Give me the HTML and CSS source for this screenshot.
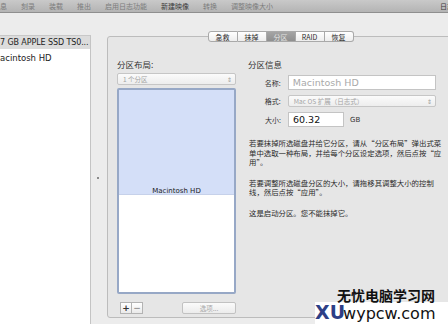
FILE: index.html
```html
<!DOCTYPE html>
<html lang="zh-CN">
<head>
    <meta charset="utf-8">
    <title>磁盘工具 - 分区</title>
    <link rel="stylesheet" href="styles.css">
</head>
<body>
    <div class="window">
        <div class="toolbar">
            <span class="tool first">信息</span>
            <span class="tool">刻录</span>
            <span class="tool">装载</span>
            <span class="tool">推出</span>
            <span class="tool">启用日志功能</span>
            <span class="tool active">新建映像</span>
            <span class="tool">转换</span>
            <span class="tool">调整映像大小</span>
            <span class="tool log">日志</span>
        </div>

        <div class="content">
            <div class="sidebar">
                <div class="disk">7 GB APPLE SSD TS0...</div>
                <div class="volume">acintosh HD</div>
            </div>

            <div class="splitter"><span class="grip"></span></div>

            <div class="tabview">
                <div class="tabs">
                    <span class="tab">急救</span>
                    <span class="tab">抹掉</span>
                    <span class="tab selected">分区</span>
                    <span class="tab">RAID</span>
                    <span class="tab">恢复</span>
                </div>

                <div class="pane">
                    <div class="layout-col">
                        <div class="heading">分区布局:</div>
                        <div class="popup">
                            <span>1 个分区</span>
                            <span class="arrows">&#8661;</span>
                        </div>
                        <div class="partitions">
                            <div class="part-used">
                                <span>Macintosh HD</span>
                            </div>
                            <div class="part-free"></div>
                        </div>
                        <div class="part-buttons">
                            <div class="plusminus">
                                <span class="pm">+</span>
                                <span class="pm">&minus;</span>
                            </div>
                            <span class="options">选项...</span>
                        </div>
                    </div>

                    <div class="info-col">
                        <div class="heading">分区信息</div>
                        <div class="field">
                            <label>名称:</label>
                            <div class="input name">Macintosh HD</div>
                        </div>
                        <div class="field">
                            <label>格式:</label>
                            <div class="popup format">
                                <span>Mac OS 扩展（日志式）</span>
                                <span class="arrows">&#8661;</span>
                            </div>
                        </div>
                        <div class="field">
                            <label>大小:</label>
                            <div class="input size">60.32</div>
                            <span class="unit">GB</span>
                        </div>

                        <p class="help">若要抹掉所选磁盘并给它分区，请从“分区布局”弹出式菜<br>单中选取一种布局，并给每个分区设定选项，然后点按“应<br>用”。</p>
                        <p class="help">若要调整所选磁盘分区的大小，请拖移其调整大小的控制<br>线，然后点按“应用”。</p>
                        <p class="help">这是启动分区。您不能抹掉它。</p>
                    </div>
                </div>
            </div>
        </div>

        <div class="watermark">
            <div class="wm-title">无忧电脑学习网</div>
            <div class="wm-url"><span class="wm-xu">XU</span>wypcw.com</div>
        </div>
    </div>
</body>
</html>
```

FILE: styles.css
```css
body {
    margin: 0;
    font-family: "DejaVu Sans", "Noto Sans CJK SC", sans-serif;
    color: #222;
}

.window {
    position: relative;
    width: 448px;
    height: 324px;
    overflow: hidden;
    background-color: #ececec;
}

/* toolbar labels */
.toolbar {
    display: flex;
    align-items: center;
    height: 12px;
    background: linear-gradient(#c9c9c9, #b4b4b4);
    border-bottom: 1px solid #8f8f8f;
    font-family: "Noto Sans CJK SC", sans-serif;
    font-size: 7px;
    color: #7c7c7c;
    white-space: nowrap;
}

.tool {
    margin-right: 14px;
}

.tool.first {
    margin-left: -7px;
}

.tool.active {
    color: #3a3a3a;
}

.tool.log {
    margin-left: auto;
    margin-right: -6px;
    color: #3a3a3a;
}

/* main area */
.content {
    display: flex;
    height: 311px;
    padding-top: 18px;
    box-sizing: border-box;
}

.sidebar {
    width: 90px;
    margin-top: 4px;
    margin-bottom: -10px;
    background-color: #fff;
    border-top: 1px solid #c8c8c8;
    border-right: 1px solid #c4c4c4;
    font-size: 8px;
    white-space: nowrap;
    overflow: hidden;
}

.disk {
    height: 13px;
    line-height: 13px;
    background-color: #dcdcdc;
    color: #1e1e1e;
    letter-spacing: -0.1px;
}

.volume {
    padding-top: 3px;
    line-height: 12px;
    font-size: 8.5px;
}

.splitter {
    width: 16px;
    display: flex;
    align-items: center;
    justify-content: center;
}

.grip {
    width: 2px;
    height: 2px;
    margin: 0 3px 0 0;
    background-color: #8a8a8a;
}

.tabview {
    flex: 1;
    display: flex;
    flex-direction: column;
    margin-right: -6px;
}

.tabs {
    display: flex;
    justify-content: center;
    height: 11px;
    position: relative;
    z-index: 1;
    font-family: "Noto Sans CJK SC", sans-serif;
    font-size: 7px;
}

.tab {
    width: 28px;
    line-height: 10px;
    text-align: center;
    background: linear-gradient(#ffffff, #ededed);
    border: 1px solid #a9a9a9;
    border-left: none;
    color: #2a2a2a;
}

.tab:first-child {
    border-left: 1px solid #a9a9a9;
    border-radius: 3px 0 0 3px;
}

.tab:last-child {
    border-radius: 0 3px 3px 0;
}

.tab.selected {
    background: linear-gradient(#a5a5a5, #8f8f8f);
    color: #e4e4e4;
}

.pane {
    flex: 1;
    display: flex;
    gap: 12px;
    margin-top: -6px;
    margin-bottom: 6px;
    padding: 21px 0 0 9px;
    background-color: #e6e6e6;
    border: 1px solid #bcbcbc;
    border-radius: 3px;
}

.heading {
    height: 12px;
    font-family: "Noto Sans CJK SC", sans-serif;
    font-size: 8.5px;
    line-height: 12px;
    color: #333;
}

/* partition layout column */
.layout-col {
    width: 119px;
    display: flex;
    flex-direction: column;
}

.popup {
    display: flex;
    justify-content: space-between;
    align-items: center;
    height: 10px;
    margin-top: 3px;
    padding: 0 3px 0 5px;
    background: linear-gradient(#fbfbfb, #ededed);
    border: 1px solid #c6c6c6;
    border-radius: 2px;
    font-family: "Noto Sans CJK SC", sans-serif;
    font-size: 6.5px;
    color: #a3a3a3;
}

.arrows {
    font-size: 6px;
    color: #9a9a9a;
}

.partitions {
    display: flex;
    flex-direction: column;
    height: 202px;
    margin-top: 3px;
    border: 2px solid #97a8c6;
    border-radius: 2px;
}

.part-used {
    height: 104px;
    display: flex;
    align-items: flex-end;
    justify-content: center;
    background-color: #d4dff8;
    border-bottom: 1px solid #c6d1ea;
    font-size: 7px;
    color: #1c1c1c;
}

.part-used span {
    margin-bottom: -1px;
}

.part-free {
    flex: 1;
    background-color: #fff;
}

.part-buttons {
    display: flex;
    justify-content: space-between;
    margin-top: 8px;
    padding-left: 3px;
}

.plusminus {
    display: flex;
}

.pm {
    width: 10px;
    height: 10px;
    line-height: 10px;
    text-align: center;
    background: linear-gradient(#ffffff, #eaeaea);
    border: 1px solid #b3b3b3;
    font-size: 9px;
    font-weight: bold;
    color: #333;
}

.pm + .pm {
    border-left: none;
    color: #9a9a9a;
}

.options {
    width: 52px;
    height: 10px;
    line-height: 10px;
    text-align: center;
    background: linear-gradient(#fbfbfb, #ececec);
    border: 1px solid #c2c2c2;
    border-radius: 2px;
    font-family: "Noto Sans CJK SC", sans-serif;
    font-size: 6.5px;
    color: #a8a8a8;
}

/* partition info column */
.info-col {
    width: 188px;
    display: flex;
    flex-direction: column;
}

.field {
    display: flex;
    align-items: center;
    margin-top: 5px;
}

.field label {
    width: 33px;
    margin-right: 7px;
    text-align: right;
    font-family: "Noto Sans CJK SC", sans-serif;
    font-size: 7px;
    color: #333;
}

.input {
    height: 13px;
    line-height: 13px;
    padding-left: 4px;
    background-color: #fff;
    border: 1px solid #c4c4c4;
    font-size: 9.5px;
}

.input.name {
    width: 143px;
    color: #a9a9a9;
}

.popup.format {
    width: 139px;
    margin-top: 0;
}

.input.size {
    width: 50px;
    color: #111;
}

.unit {
    margin-left: 6px;
    font-size: 7px;
    color: #333;
}

.help {
    margin: 11px 0 0 1px;
    font-family: "Noto Sans CJK SC", sans-serif;
    font-size: 7.4px;
    line-height: 9.5px;
    color: #2a2a2a;
    white-space: nowrap;
}

.help + .help {
    margin-top: 11px;
}

/* site watermark in the corner */
.watermark {
    position: absolute;
    right: 0;
    bottom: 0;
    width: 133px;
    height: 36px;
}

.wm-title {
    padding-left: 22px;
    font-family: "Noto Sans CJK SC", sans-serif;
    font-size: 14px;
    font-weight: bold;
    line-height: 14px;
    color: #111;
}

.wm-url {
    height: 22px;
    background-color: #fff;
    font-family: "DejaVu Sans", sans-serif;
    font-size: 16px;
    line-height: 20px;
    color: #111;
    white-space: nowrap;
}

.wm-xu {
    font-size: 19px;
    font-weight: bold;
    color: #2d3f86;
    margin-right: -2px;
}
```
